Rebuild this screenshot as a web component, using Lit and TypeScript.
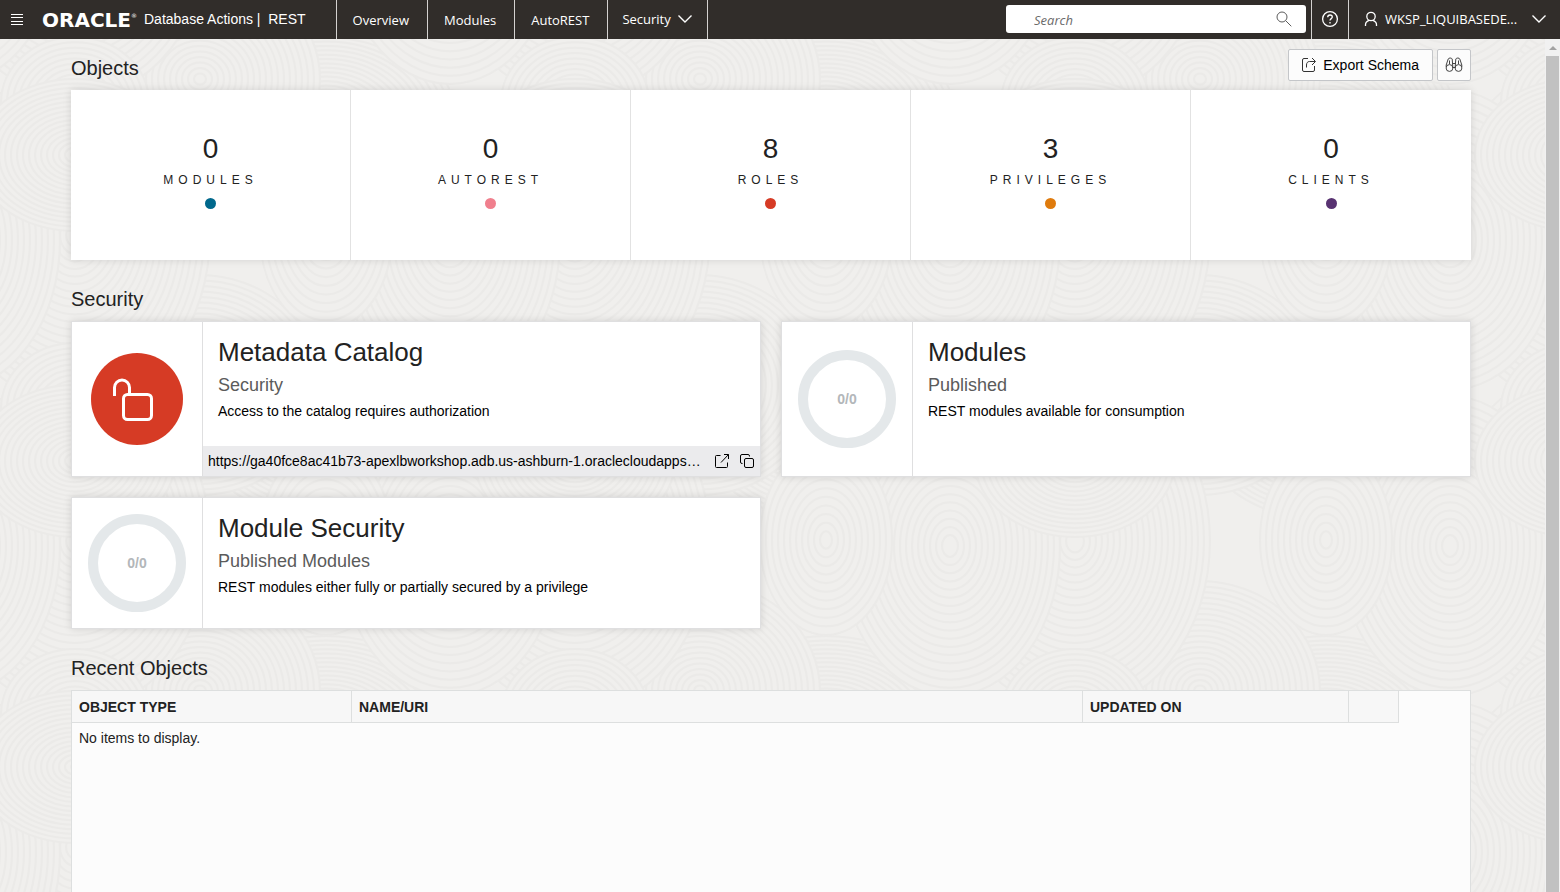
import { LitElement, html, css, svg } from "lit";
import { customElement } from "lit/decorators.js";
import { classMap } from "lit/directives/class-map.js";

const TILE_W = 500;
const TILE_H = 306;
const RING_STEP = 6;

// Overlapping ring groups, painted back to front: centre, radii.
const RINGS = [
  [66, 290, 130, 95],
  [440, 250, 120, 110],
  [315, 100, 135, 170],
  [190, 105, 110, 150],
  [66, 99, 66, 95],
  [315, 274, 74, 66],
  [315, 20, 100, 76],
];

const chevron = html`<svg width="16" height="16" viewBox="0 0 16 16" aria-hidden="true">
  <path d="M1.5 4.5 8 11l6.5-6.5" fill="none" stroke="currentColor" stroke-width="1.4" />
</svg>`;

@customElement("wave-backdrop")
class WaveBackdrop extends LitElement {
  static styles = css`
    :host { display: block; }
    svg { display: block; width: 100%; height: 100%; }
    .ring { fill: #f0efed; stroke: #ebeae8; stroke-width: 2; }
  `;

  private group(cx: number, cy: number, rx: number, ry: number) {
    const rings = [];
    for (let inset = 0; rx - inset > 3; inset += RING_STEP) {
      rings.push(svg`<ellipse class="ring" cx=${cx} cy=${cy} rx=${rx - inset} ry=${Math.max(3, ry * (1 - inset / rx))} />`);
    }
    return rings;
  }

  render() {
    const shapes = RINGS.map(([x, y, rx, ry]) =>
      [-TILE_W, 0, TILE_W].map((dx) => [-TILE_H, 0, TILE_H].map((dy) => this.group(x + dx, y + dy, rx, ry)))
    );
    return html`<svg aria-hidden="true">
      <defs>
        <pattern id="waves" width=${TILE_W} height=${TILE_H} patternUnits="userSpaceOnUse" patternTransform="translate(260 96)">
          ${svg`${shapes}`}
        </pattern>
      </defs>
      <rect width="100%" height="100%" fill="url(#waves)" />
    </svg>`;
  }
}

@customElement("count-ring")
class CountRing extends LitElement {
  static properties = { label: { type: String } };
  declare label: string;
  static styles = css`
    :host { display: block; }
    .ring {
      box-sizing: border-box;
      width: 98px;
      height: 98px;
      border: 10px solid #e4e8ea;
      border-radius: 50%;
      display: grid;
      place-items: center;
      color: #b3b7ba;
      font-size: 14px;
      font-weight: bold;
    }
  `;
  render() {
    return html`<div class="ring">${this.label}</div>`;
  }
}

@customElement("app-root")
class AppRoot extends LitElement {
  static styles = css`
    :host {
      display: flex;
      flex-direction: column;
      height: 100vh;
      overflow: hidden;
      background: #f0efed;
      color: #222;
      font-family: "Liberation Sans", Arial, sans-serif;
      font-size: 14px;
      line-height: 20px;
    }
    * { box-sizing: border-box; }
    button, input { font: inherit; color: inherit; }
    button { cursor: pointer; }
    svg { display: block; flex: none; }
    h1, h2, h3, p { margin: 0; font-weight: normal; }

    .bar {
      display: flex;
      height: 39px;
      flex: none;
      background: #312d2a;
      color: #fff;
    }
    .menu {
      border: 0;
      background: none;
      padding: 0 10px;
    }
    .brand {
      display: flex;
      align-items: center;
      padding: 0 30px 0 8px;
      white-space: pre;
    }
    .logo {
      display: flex;
      width: 102px;
      font-family: "DejaVu Sans", sans-serif;
      font-size: 20px;
      font-weight: bold;
    }
    .mark { font-size: 6px; line-height: 12px; font-weight: normal; }
    .product { font-size: 14px; line-height: 20px; padding-bottom: 2px; }
    .nav { display: flex; border-left: 1px solid #d4d2d0; }
    .nav-item {
      display: flex;
      align-items: center;
      gap: 6px;
      padding: 0 18px 0 16px;
      border: 0;
      border-right: 1px solid #d4d2d0;
      background: none;
      color: #fff;
      text-decoration: none;
      font-family: "Open Sans", sans-serif;
      font-size: 13px;
    }
    button.nav-item { padding: 0 14px 2px; }
    .search {
      display: flex;
      align-items: center;
      width: 300px;
      margin: 5px 5px 6px auto;
      padding: 0 14px 0 28px;
      border-radius: 3px;
      background: #fff;
      color: #5c5c5c;
    }
    .search input {
      flex: 1;
      min-width: 0;
      border: 0;
      padding: 2px 0 0;
      outline: 0;
      background: none;
      font-family: "Open Sans", sans-serif;
      font-size: 13px;
      font-style: italic;
    }
    .search input::placeholder { color: #6b6b6b; opacity: 1; }
    .help, .user {
      display: flex;
      align-items: center;
      border: 0;
      border-left: 1px solid #d4d2d0;
      background: none;
      padding: 0 9px 1px;
    }
    .user {
      width: 212px;
      gap: 7px;
      padding: 0 13px 2px 15px;
      font-family: "Open Sans", sans-serif;
      font-size: 13px;
    }
    .user-name {
      flex: 1;
      min-width: 0;
      text-align: left;
      white-space: nowrap;
    }

    .view { display: flex; flex: 1; min-height: 0; position: relative; }
    wave-backdrop { position: absolute; inset: 0; }
    .page {
      position: relative;
      display: flex;
      flex-direction: column;
      flex: 1;
      min-width: 0;
      overflow: hidden;
      padding: 10px 74px 0 71px;
    }
    .scroll {
      position: relative;
      width: 15px;
      flex: none;
      display: flex;
      flex-direction: column;
      align-items: center;
      background: #f1f1f1;
    }
    .scroll-arrow { height: 17px; padding-top: 7px; }
    .scroll-thumb { width: 13px; flex: 1; background: #c1c1c1; }

    .heading { font-size: 20px; line-height: 24px; }
    .toolbar { display: flex; align-items: center; gap: 4px; height: 32px; margin-bottom: 9px; }
    .toolbar .heading { flex: 1; padding-top: 6px; }
    .btn {
      display: flex;
      align-items: center;
      justify-content: center;
      gap: 6px;
      height: 32px;
      min-width: 34px;
      padding: 0 13px 0 12px;
      border: 1px solid #c4c6c9;
      border-radius: 2px;
      background: #fcfcfc;
      color: #000;
    }
    .btn.icon-only { padding: 0; }

    .stats {
      display: grid;
      grid-template-columns: repeat(5, 1fr);
      background: #fff;
      box-shadow: 0 0 8px rgba(0, 0, 0, 0.12);
      margin-bottom: 27px;
    }
    .stat {
      display: flex;
      flex-direction: column;
      align-items: center;
      height: 170px;
      padding-top: 43px;
      border-right: 1px solid #e2e2e2;
    }
    .stat:last-child { border-right: 0; }
    .stat-value { font-size: 28px; line-height: 32px; }
    .stat-label {
      font-size: 12px;
      line-height: 16px;
      letter-spacing: 5px;
      margin: 7px 0 10px;
    }
    .dot { width: 11px; height: 11px; border-radius: 50%; }
    .modules { background: #00688c; }
    .autorest { background: #f07f8d; }
    .roles { background: #d63b25; }
    .privileges { background: #df7b0d; }
    .clients { background: #583271; }

    .cards {
      display: grid;
      grid-template-columns: 1fr 1fr;
      gap: 20px;
      margin: 10px 0 27px;
    }
    .card {
      display: grid;
      grid-template-columns: 131px 1fr;
      min-height: 132px;
      border: 1px solid #dfdfe0;
      background: #fff;
      box-shadow: 0 0 8px rgba(0, 0, 0, 0.12);
    }
    .card-side { display: grid; place-items: center; border-right: 1px solid #dfdfe0; }
    .lock {
      display: grid;
      place-items: center;
      width: 92px;
      height: 92px;
      border-radius: 50%;
      background: #d63b25;
      color: #fff;
    }
    .card-main { display: flex; flex-direction: column; min-width: 0; }
    .card-text { flex: 1; padding: 14px 15px 26px; }
    .card-title { font-size: 26px; line-height: 32px; }
    .card-sub { font-size: 18px; line-height: 24px; margin: 5px 0; color: #5b5b5b; }
    .card-desc { font-size: 14px; line-height: 18px; color: #000; }
    .link-bar {
      display: flex;
      align-items: center;
      height: 30px;
      padding: 0 5px;
      background: #ebebed;
      color: #000;
    }
    .link {
      flex: 1;
      min-width: 0;
      white-space: nowrap;
      color: inherit;
      text-decoration: none;
    }
    .link-btn { border: 0; background: none; padding: 0; margin-left: 9px; color: #000; }

    .grid {
      flex: 1;
      margin-top: 10px;
      border: 1px solid #dddfdf;
      border-bottom: 0;
      background: #fcfcfc;
    }
    .table { width: calc(100% - 71px); table-layout: fixed; border-collapse: separate; border-spacing: 0; }
    .table th {
      height: 32px;
      padding: 0 7px;
      border-right: 1px solid #dddfdf;
      border-bottom: 1px solid #dddfdf;
      background: #f7f7f7;
      text-align: left;
    }
    .table td { padding: 5px 7px; }
    .col-type { width: 280px; }
    .col-updated { width: 266px; }
    .col-menu { width: 50px; }
  `;

  private stats = [
    { value: 0, label: "MODULES", tone: "modules" },
    { value: 0, label: "AUTOREST", tone: "autorest" },
    { value: 8, label: "ROLES", tone: "roles" },
    { value: 3, label: "PRIVILEGES", tone: "privileges" },
    { value: 0, label: "CLIENTS", tone: "clients" },
  ];

  private cardText(title: string, sub: string, desc: string) {
    return html`<div class="card-text">
      <h3 class="card-title">${title}</h3>
      <p class="card-sub">${sub}</p>
      <p class="card-desc">${desc}</p>
    </div>`;
  }

  private header() {
    return html`<header class="bar">
      <button class="menu" aria-label="Menu">
        <svg width="14" height="14" viewBox="0 0 14 14"><path d="M1 1.500h12M1 4.500h12M1 8.500h12M1 11.500h12" stroke="#fff" /></svg>
      </button>
      <h1 class="brand"><span class="logo">ORACLE<span class="mark">®</span></span><span class="product">Database Actions |  REST</span></h1>
      <nav class="nav">
        <a class="nav-item" href="#overview">Overview</a>
        <a class="nav-item" href="#modules">Modules</a>
        <a class="nav-item" href="#autorest">AutoREST</a>
        <button class="nav-item">Security ${chevron}</button>
      </nav>
      <label class="search">
        <input type="text" placeholder="Search" aria-label="Search" />
        <svg width="16" height="16" viewBox="0 0 16 16" fill="none" stroke="currentColor">
          <circle cx="6" cy="6" r="5" /><path d="m9.7 9.7 5.6 5.6" />
        </svg>
      </label>
      <button class="help" aria-label="Help">
        <svg width="18" height="18" viewBox="0 0 18 18" fill="none" stroke="#fff" stroke-width="1.3">
          <circle cx="9" cy="9" r="7.4" />
          <path d="M6.700 7.300c0-1.500 1-2.300 2.300-2.300s2.300.8 2.300 2c0 1.600-2.300 1.700-2.300 3.600M9 12v1.500" />
        </svg>
      </button>
      <button class="user">
        <svg width="14" height="16" viewBox="0 0 14 16" fill="none" stroke="#fff" stroke-width="1.3">
          <circle cx="7" cy="5.5" r="4.200" /><path d="M1.500 15v-1.200c0-2.200 1.500-3.800 3.700-4.500M12.500 15v-1.200c0-2.200-1.500-3.800-3.700-4.500" />
        </svg>
        <span class="user-name">WKSP_LIQUIBASEDE...</span>
        ${chevron}
      </button>
    </header>`;
  }

  render() {
    return html`
      ${this.header()}
      <div class="view">
        <wave-backdrop></wave-backdrop>
        <main class="page">
          <div class="toolbar">
            <h2 class="heading">Objects</h2>
            <button class="btn">
              <svg width="16" height="16" viewBox="0 0 16 16" fill="none" stroke="#333">
                <path d="M7 1.500H3A1.500 1.500 0 0 0 1.500 3v10A1.500 1.500 0 0 0 3 14.500h9a1.500 1.500 0 0 0 1.500-1.500V9M5.500 10.500V8c0-2 1-3.500 3-3.500h5.500M11 1l3.500 3.500L11 8" />
              </svg>
              Export Schema
            </button>
            <button class="btn icon-only" aria-label="Find">
              <svg width="18" height="16" viewBox="0 0 18 16" fill="none" stroke="#444">
                <circle cx="4.500" cy="11" r="3.400" /><circle cx="13.500" cy="11" r="3.400" />
                <path d="M1.200 10V8l2-6c.4-1.300 3.600-1.300 4 0l.7 9M16.800 10V8l-2-6c-.4-1.300-3.600-1.300-4 0l-.7 9M7.500 6.500h3M7.900 10.500h2.200M4.500 3.500V7M13.500 3.500V7" />
              </svg>
            </button>
          </div>
          <section class="stats">
            ${this.stats.map(
              (s) => html`<div class="stat">
                <span class="stat-value">${s.value}</span>
                <span class="stat-label">${s.label}</span>
                <span class=${classMap({ dot: true, [s.tone]: true })}></span>
              </div>`
            )}
          </section>
          <h2 class="heading">Security</h2>
          <section class="cards">
            <article class="card">
              <div class="card-side">
                <div class="lock">
                  <svg width="54" height="46" viewBox="0 0 54 46" fill="none" stroke="currentColor" stroke-width="3">
                    <path d="M4.500 20V11.500a7.500 7.500 0 0 1 15 0v7" />
                    <rect x="13.500" y="18.500" width="28" height="25" rx="4" />
                  </svg>
                </div>
              </div>
              <div class="card-main">
                ${this.cardText("Metadata Catalog", "Security", "Access to the catalog requires authorization")}
                <div class="link-bar">
                  <a class="link" href="#catalog">https://ga40fce8ac41b73-apexlbworkshop.adb.us-ashburn-1.oraclecloudapps…</a>
                  <button class="link-btn" aria-label="Open in new tab">
                    <svg width="16" height="16" viewBox="0 0 16 16" fill="none" stroke="currentColor">
                      <path d="M6.500 2.500h-4a1 1 0 0 0-1 1v10a1 1 0 0 0 1 1h10a1 1 0 0 0 1-1v-4M7 9.500l7.500-8M10 1.500h4.500V6" />
                    </svg>
                  </button>
                  <button class="link-btn" aria-label="Copy">
                    <svg width="16" height="16" viewBox="0 0 16 16" fill="none" stroke="currentColor">
                      <rect x="5.500" y="5.500" width="9" height="9" rx="1.500" />
                      <path d="M3.500 10.500H3A1.500 1.500 0 0 1 1.500 9V3A1.500 1.500 0 0 1 3 1.500h6A1.500 1.500 0 0 1 10.500 3v.500" />
                    </svg>
                  </button>
                </div>
              </div>
            </article>
            <article class="card">
              <div class="card-side"><count-ring label="0/0"></count-ring></div>
              <div class="card-main">${this.cardText("Modules", "Published", "REST modules available for consumption")}</div>
            </article>
            <article class="card">
              <div class="card-side"><count-ring label="0/0"></count-ring></div>
              <div class="card-main">
                ${this.cardText("Module Security", "Published Modules", "REST modules either fully or partially secured by a privilege")}
              </div>
            </article>
          </section>
          <h2 class="heading">Recent Objects</h2>
          <div class="grid">
            <table class="table">
              <thead>
                <tr>
                  <th class="col-type">OBJECT TYPE</th>
                  <th>NAME/URI</th>
                  <th class="col-updated">UPDATED ON</th>
                  <th class="col-menu"></th>
                </tr>
              </thead>
              <tbody>
                <tr><td colspan="4">No items to display.</td></tr>
              </tbody>
            </table>
          </div>
        </main>
        <div class="scroll" aria-hidden="true">
          <div class="scroll-arrow"><svg width="8" height="4" viewBox="0 0 8 4"><path d="M0 4 4 0l4 4z" fill="#a3a3a3" /></svg></div>
          <div class="scroll-thumb"></div>
        </div>
      </div>
    `;
  }
}
